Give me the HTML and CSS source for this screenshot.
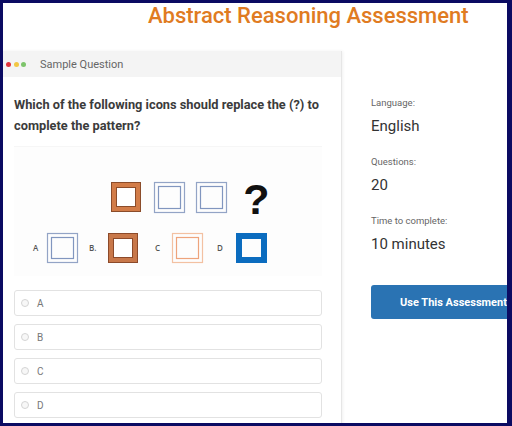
FILE: index.html
```html
<!DOCTYPE html>
<html lang="en">
<head>
<meta charset="utf-8">
<title>Abstract Reasoning Assessment</title>
<link rel="stylesheet" href="styles.css">
</head>
<body>
<div class="frame">
  <h1 class="title">Abstract Reasoning Assessment</h1>
  <div class="main">
    <section class="card">
      <div class="card-head">
        <span class="dots"><i class="dot red"></i><i class="dot yellow"></i><i class="dot green"></i></span>
        <span class="card-title">Sample Question</span>
      </div>
      <div class="card-body">
        <p class="question">Which of the following icons should replace the (?) to complete the pattern?</p>
        <div class="figure">
          <svg width="308" height="130" viewBox="0 0 308 130" xmlns="http://www.w3.org/2000/svg">
            <!-- row 1 -->
            <rect x="97.5" y="35.5" width="29" height="29" fill="#d27c48" stroke="#8b4c2a" stroke-width="1"/>
            <rect x="102.5" y="40.5" width="19" height="19" fill="#fff" stroke="#8b4c2a" stroke-width="1"/>
            <rect x="140.5" y="35.5" width="30" height="30" fill="none" stroke="#93a4c6" stroke-width="1.2"/>
            <rect x="144.5" y="39.5" width="22" height="22" fill="none" stroke="#8196bf" stroke-width="1.2"/>
            <rect x="182.5" y="35.5" width="30" height="30" fill="none" stroke="#93a4c6" stroke-width="1.2"/>
            <rect x="186.5" y="39.5" width="22" height="22" fill="none" stroke="#8196bf" stroke-width="1.2"/>
            <text x="242.5" y="67" text-anchor="middle" class="qmark">?</text>
            <!-- row 2 -->
            <text x="19" y="104" class="opt-label">A</text>
            <rect x="33.5" y="86.5" width="30" height="29" fill="none" stroke="#93a4c6" stroke-width="1.2"/>
            <rect x="37.5" y="90.5" width="22" height="21" fill="none" stroke="#8196bf" stroke-width="1.2"/>
            <text x="75" y="104" class="opt-label">B.</text>
            <rect x="94.5" y="86.5" width="29" height="29" fill="#c8784a" stroke="#8c4a2a" stroke-width="1"/>
            <rect x="99.5" y="91.5" width="19" height="19" fill="#fff" stroke="#8c4a2a" stroke-width="1"/>
            <text x="141" y="104" class="opt-label">C</text>
            <rect x="158.5" y="86.5" width="30" height="29" fill="none" stroke="#f3c1a2" stroke-width="1.2"/>
            <rect x="162.5" y="90.5" width="22" height="21" fill="none" stroke="#eea47c" stroke-width="1.2"/>
            <text x="203" y="104" class="opt-label">D</text>
            <rect x="225" y="89" width="25" height="24" fill="none" stroke="#0b6cbf" stroke-width="6"/>
          </svg>
        </div>
        <ul class="options">
          <li class="option"><span class="radio"></span><span>A</span></li>
          <li class="option"><span class="radio"></span><span>B</span></li>
          <li class="option"><span class="radio"></span><span>C</span></li>
          <li class="option"><span class="radio"></span><span>D</span></li>
        </ul>
      </div>
    </section>
    <aside class="info">
      <div class="info-item">
        <div class="info-label">Language:</div>
        <div class="info-value">English</div>
      </div>
      <div class="info-item">
        <div class="info-label">Questions:</div>
        <div class="info-value">20</div>
      </div>
      <div class="info-item">
        <div class="info-label">Time to complete:</div>
        <div class="info-value">10 minutes</div>
      </div>
      <button class="use-btn" type="button">Use This Assessment</button>
    </aside>
  </div>
</div>
</body>
</html>
```
FILE: styles.css
```css
* { box-sizing: border-box; }

html, body {
  margin: 0;
  padding: 0;
  background: #0b0b62;
}

body {
  font-family: Roboto, "Liberation Sans", Arial, sans-serif;
}

.frame {
  width: 512px;
  height: 426px;
  background: #fff;
  border: 3px solid #0b0b62;
  border-right-width: 5px;
  overflow: hidden;
}

.title {
  margin: 0;
  padding-left: 145px;
  font-size: 22px;
  line-height: 26px;
  font-weight: 500;
  color: #e07b22;
  white-space: nowrap;
}

.main {
  display: flex;
  margin-top: 22px;
  height: 400px;
}

.card {
  flex: 0 0 339px;
  background: #fff;
  border-right: 1px solid #e6e6e6;
  box-shadow: 1px 0 3px rgba(0, 0, 0, 0.06);
}

.card-head {
  display: flex;
  align-items: center;
  height: 26px;
  background: #f4f4f4;
  padding-left: 3px;
}

.dots {
  display: flex;
  gap: 2.5px;
  margin-right: 14px;
}

.dot {
  display: block;
  width: 5px;
  height: 5px;
  border-radius: 50%;
}
.dot.red { background: #e0323a; }
.dot.yellow { background: #f2c744; }
.dot.green { background: #7dc46b; }

.card-title {
  font-size: 11px;
  color: #666;
}

.card-body {
  padding: 17px 19px 0 11px;
}

.question {
  margin: 0 -14px 0 0;
  font-size: 12.8px;
  line-height: 21px;
  font-weight: 700;
  color: #3b3b3b;
}

.figure {
  margin-top: 10px;
  height: 130px;
  background: #fdfdfd;
  border-top: 1px solid #f6f6f6;
}

.figure svg { display: block; }

.qmark {
  font-family: "Liberation Sans", Arial, sans-serif;
  font-weight: 700;
  font-size: 43px;
  fill: #111;
}

.opt-label {
  font-family: "Open Sans", "Liberation Sans", sans-serif;
  font-weight: 600;
  font-size: 8px;
  fill: #555;
}

.options {
  list-style: none;
  margin: 14px 0 0;
  padding: 0;
}

.option {
  display: flex;
  align-items: center;
  height: 26px;
  margin-bottom: 8px;
  padding-left: 6px;
  border: 1px solid #e2e2e2;
  border-radius: 3px;
  font-size: 10px;
  color: #777;
}

.radio {
  width: 8px;
  height: 8px;
  border: 1px solid #d4d4d4;
  border-radius: 50%;
  background: #f7f7f7;
  margin-right: 8px;
}

.info {
  margin-left: 29px;
  padding-top: 45px;
  display: flex;
  flex-direction: column;
  align-items: flex-start;
}

.info-item { margin-bottom: 19px; }
.info-item:last-of-type { margin-bottom: 0; }

.info-label {
  font-size: 9.5px;
  line-height: 14px;
  color: #666;
  margin-bottom: 6px;
}

.info-value {
  font-size: 15px;
  line-height: 20px;
  color: #333;
}

.use-btn {
  margin-top: 31px;
  width: 165px;
  height: 34px;
  flex: 0 0 auto;
  border: none;
  border-radius: 3px;
  background: #2a73b3;
  color: #fff;
  font-family: Roboto, "Liberation Sans", sans-serif;
  font-weight: 700;
  font-size: 11px;
}
```
